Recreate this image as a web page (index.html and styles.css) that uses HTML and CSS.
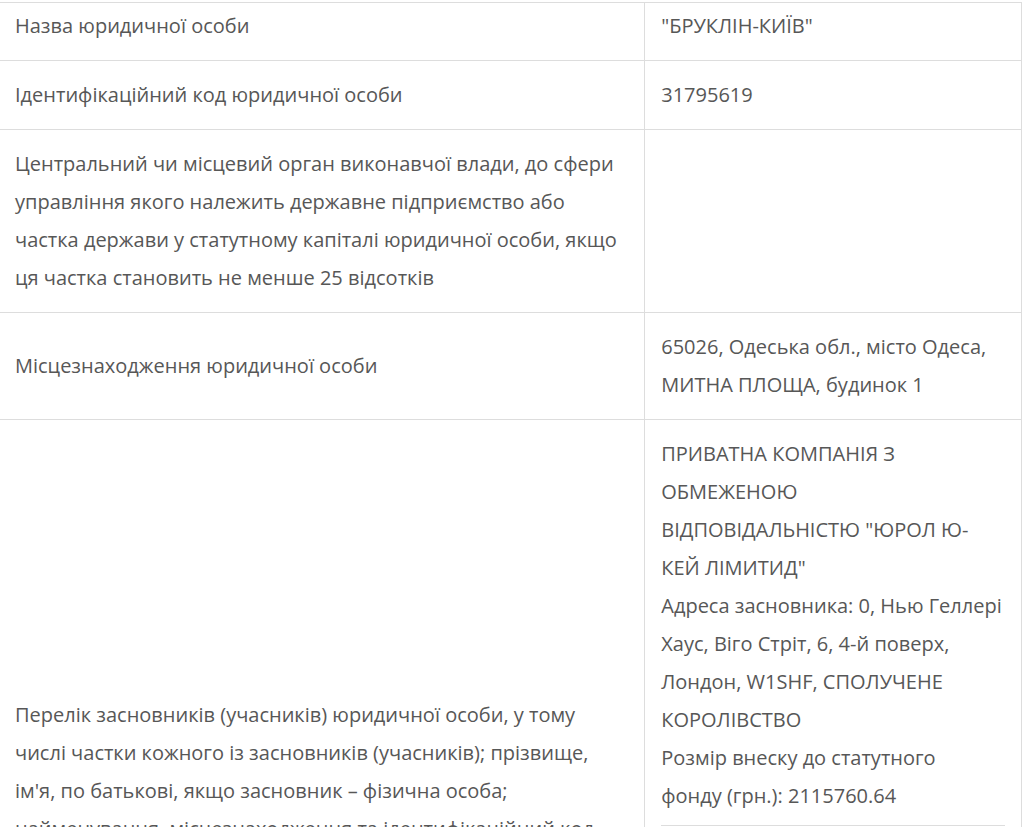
FILE: index.html
```html
<!DOCTYPE html>
<html lang="uk">
<head>
<meta charset="utf-8">
<title>Відомості про юридичну особу</title>
<link rel="stylesheet" href="styles.css">
</head>
<body>
<table class="info">
  <tbody>
    <tr class="first">
      <td class="label">Назва юридичної особи</td>
      <td class="value">"БРУКЛІН-КИЇВ"</td>
    </tr>
    <tr>
      <td class="label">Ідентифікаційний код юридичної особи</td>
      <td class="value">31795619</td>
    </tr>
    <tr>
      <td class="label">Центральний чи місцевий орган виконавчої влади, до сфери управління якого належить державне підприємство або частка держави у статутному капіталі юридичної особи, якщо ця частка становить не менше 25 відсотків</td>
      <td class="value"></td>
    </tr>
    <tr>
      <td class="label">Місцезнаходження юридичної особи</td>
      <td class="value">65026, Одеська обл., місто Одеса, МИТНА ПЛОЩА, будинок 1</td>
    </tr>
    <tr>
      <td class="label">Перелік засновників (учасників) юридичної особи, у тому числі частки кожного із засновників (учасників); прізвище, ім'я, по батькові, якщо засновник – фізична особа; найменування, місцезнаходження та ідентифікаційний код юридичної особи, якщо засновник – юридична особа</td>
      <td class="value">
        <div class="founders">
          <div class="founder">
            <div>ПРИВАТНА КОМПАНІЯ З<br>ОБМЕЖЕНОЮ<br>ВІДПОВІДАЛЬНІСТЮ "ЮРОЛ Ю-<br>КЕЙ ЛІМИТИД"</div>
            <div>Адреса засновника: 0, Нью Геллері Хаус, Віго Стріт, 6, 4-й поверх, Лондон, W1SHF, СПОЛУЧЕНЕ КОРОЛІВСТВО</div>
            <div>Розмір внеску до статутного<br>фонду (грн.): 2115760.64</div>
          </div>
          <div class="founder">
            <div>ТОВАРИСТВО З ОБМЕЖЕНОЮ ВІДПОВІДАЛЬНІСТЮ "ЮРОЛ УКРАЇНА"</div>
            <div>Адреса засновника: 65026, Одеська обл., місто Одеса, МИТНА ПЛОЩА, будинок 1</div>
            <div>Розмір внеску до статутного<br>фонду (грн.): 21371.32</div>
          </div>
        </div>
      </td>
    </tr>
  </tbody>
</table>
</body>
</html>
```

FILE: styles.css
```css
html, body {
  margin: 0;
  padding: 0;
  background: #ffffff;
}

body {
  padding-top: 2px;
  font-family: "Open Sans", "Noto Sans", "Liberation Sans", sans-serif;
  font-size: 20px;
  line-height: 38px;
  color: #575757;
}

.info {
  width: 1022px;
  border-collapse: collapse;
  border-top: 1px solid #dddddd;
  border-right: 1px solid #dddddd;
}

.info td {
  border-bottom: 1px solid #dddddd;
  vertical-align: middle;
  padding: 15px 16px;
}

.info td.label {
  width: 615px;
  padding-left: 15px;
  padding-right: 15px;
  border-right: 1px solid #dddddd;
}

.info td.value {
  width: 344px;
}

.info tr.first td {
  padding-top: 4px;
}

.founders {
  display: flex;
  flex-direction: column;
  gap: 6px;
}

.founder {
  padding-bottom: 10px;
  border-bottom: 1px solid #dddddd;
}
```
